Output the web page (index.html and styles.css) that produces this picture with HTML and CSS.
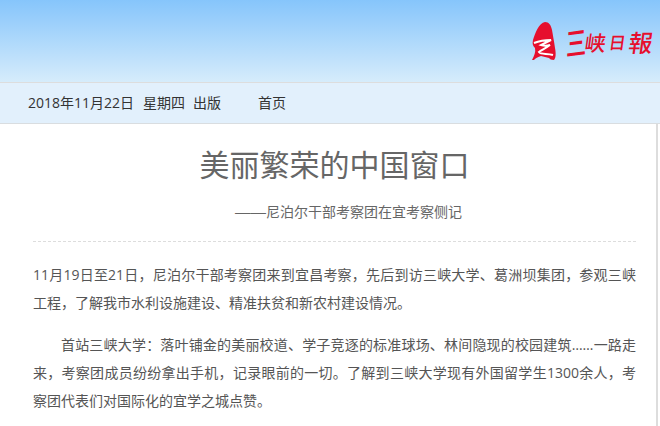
FILE: index.html
```html
<!DOCTYPE html>
<html lang="zh">
<head>
<meta charset="utf-8">
<title>美丽繁荣的中国窗口</title>
<link rel="stylesheet" href="styles.css">
</head>
<body>
<header class="banner">
  <div class="logo">
    <svg class="logo-mark" width="24" height="39" viewBox="0 0 24 39" aria-hidden="true">
      <path fill="#e60f2d" d="M13 0C17 0 19 3 20 8C21 14 22 19 23 26C24 31 24 36 22 38C19 38 18 37 17 36L9 34C5 35 3 37 2 38L0 38C2 34 4 30 3 26C1 24 0 22 1 18C3 11 7 1 13 0Z"/>
      <path fill="none" stroke="#fff" stroke-width="2" d="M2 21C7 19 13 18 19 18C15 20 11 22 9 23C12 24 15 24 18 23C14 26 10 28 7 30C9 33 15 31 21 33"/>
    </svg>
    <span class="logo-text"><span class="logo-big">三</span><span class="logo-a">峡</span><span class="logo-b">日</span><span class="logo-c">報</span></span>
  </div>
</header>
<nav class="nav">
  <span class="nav-date">2018年11月22日</span>
  <span class="nav-week">星期四</span>
  <span class="nav-issue">出版</span>
  <a class="nav-home" href="#">首页</a>
</nav>
<main class="article">
  <h1 class="title">美丽繁荣的中国窗口</h1>
  <p class="subtitle"><span class="dash">——</span>尼泊尔干部考察团在宜考察侧记</p>
  <div class="body">
    <p><span class="line">11月19日至21日<span class="fw">，</span>尼泊尔干部考察团来到宜昌考察<span class="fw">，</span>先后到访三峡大学、葛洲坝集团<span class="fw">，</span>参观三峡</span>工程<span class="fw">，</span>了解我市水利设施建设、精准扶贫和新农村建设情况。</p>
    <p class="indent"><span class="line">首站三峡大学<span class="fw">：</span>落叶铺金的美丽校道、学子竞逐的标准球场、林间隐现的校园建筑……一路走</span><span class="line">来<span class="fw">，</span>考察团成员纷纷拿出手机<span class="fw">，</span>记录眼前的一切。了解到三峡大学现有外国留学生1300余人<span class="fw">，</span>考</span>察团代表们对国际化的宜学之城点赞。</p>
  </div>
</main>
</body>
</html>
```
FILE: styles.css
```css
html, body {
  margin: 0;
  padding: 0;
  height: 426px;
  overflow: hidden;
  background: #fff;
  font-family: "Open Sans", "Noto Sans CJK SC", sans-serif;
}
.banner {
  height: 82px;
  box-sizing: border-box;
  display: flex;
  justify-content: flex-end;
  align-items: flex-start;
  padding: 22px 7px 0 0;
  background: linear-gradient(#86c5fb, #d6ecfb);
}
.logo {
  display: flex;
  align-items: center;
  gap: 10px;
}
.logo-mark {
  display: block;
}
.logo-text {
  display: flex;
  align-items: center;
  gap: 3px;
  height: 39px;
  font-family: "Noto Sans CJK SC", sans-serif;
  font-weight: 500;
  color: #e60f2d;
  transform: skewX(-8deg);
}
.logo-big {
  font-size: 20px;
  margin-right: -4px;
  transform: rotate(-8deg) scaleY(1.6);
}
.logo-a {
  font-size: 21px;
}
.logo-b {
  font-size: 17px;
}
.logo-c {
  font-size: 24px;
}
.nav {
  height: 42px;
  box-sizing: border-box;
  border-top: 1px solid #ddd;
  border-bottom: 1px solid #d9dde0;
  background: #e2f0fc;
  display: flex;
  align-items: center;
  padding-left: 28px;
  padding-bottom: 2px;
  font-size: 14px;
  color: #333;
}
.nav-week { margin-left: 9px; }
.nav-issue { margin-left: 8px; }
.nav-home {
  margin-left: 37px;
  color: #333;
  text-decoration: none;
}
.article {
  box-sizing: border-box;
  height: 302px;
  margin-right: 2px;
  border-right: 2px solid #ddd;
  padding: 19px 20px 0 33px;
}
.title {
  margin: 0;
  font-size: 30px;
  line-height: 44px;
  font-weight: 400;
  color: #666;
  text-align: center;
}
.subtitle {
  margin: 13px 0 0;
  padding-left: 202px;
  font-size: 14px;
  line-height: 24px;
  color: #666;
}
.dash {
  font-family: "Liberation Sans", sans-serif;
  font-size: 15.5px;
  line-height: 1;
}
.body {
  margin-top: 17px;
  border-top: 1px dashed #ddd;
  padding-top: 19px;
  font-size: 14px;
  line-height: 28px;
  color: #555;
}
.body p {
  margin: 0 0 14px;
}
.line {
  display: block;
  text-align: justify;
  text-align-last: justify;
  text-indent: 0;
}
.indent > .line:first-child {
  text-indent: 28px;
}
.fw {
  font-family: "Noto Sans CJK TC", sans-serif;
  line-height: 1;
}
```
